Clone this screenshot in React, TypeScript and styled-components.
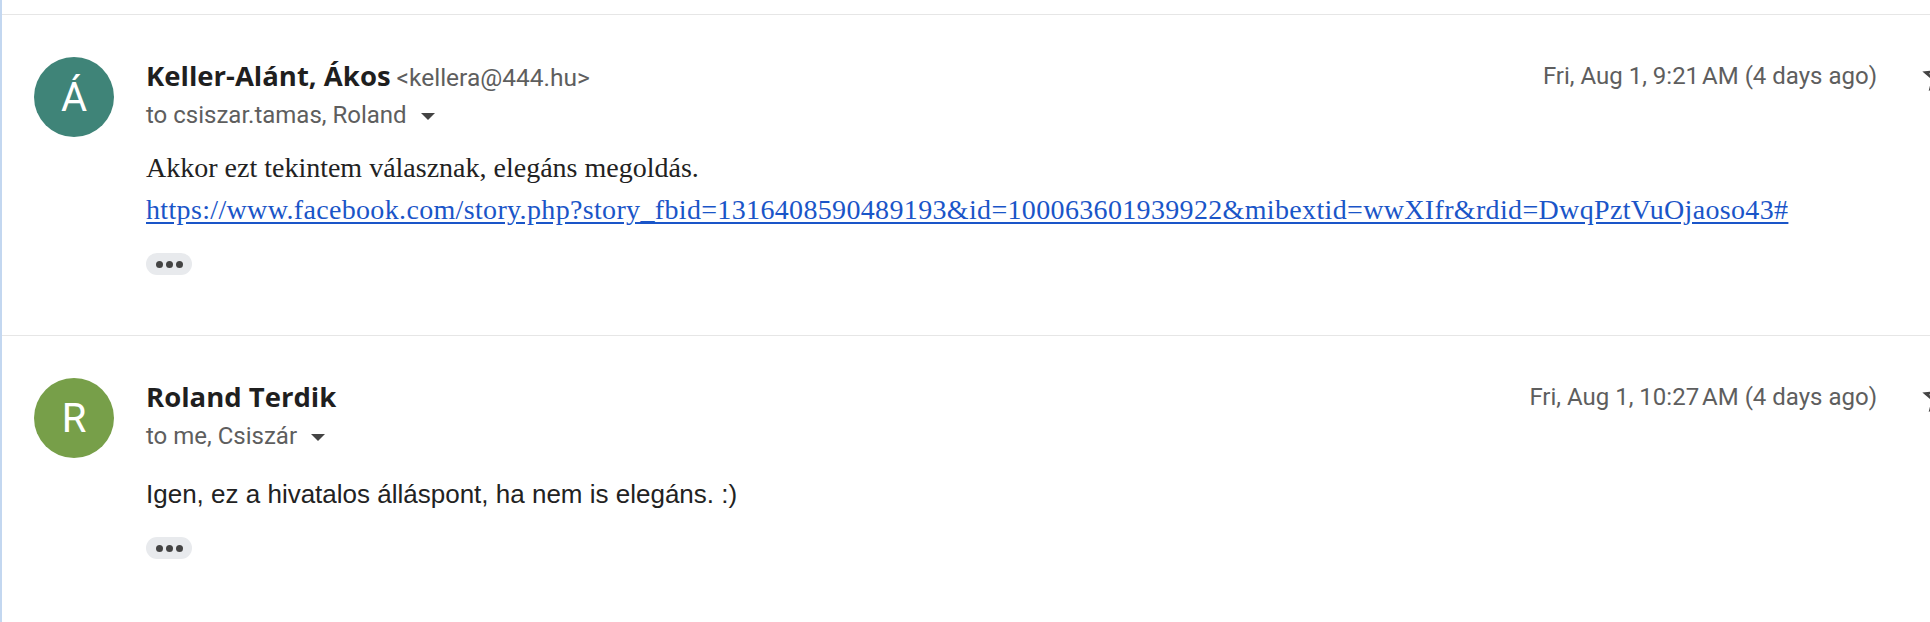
import React from 'react';
import styled, { createGlobalStyle } from 'styled-components';

const GlobalStyle = createGlobalStyle`
  html, body {
    margin: 0;
    padding: 0;
    background: #fff;
    overflow: hidden;
  }
  body {
    font-family: Roboto, "Liberation Sans", Arial, sans-serif;
    color: #1f1f1f;
  }
`;

// the thread is wider than the window: the action icons run past the right edge
const Thread = styled.div`
  width: 2079px;
  min-height: 100vh;
  box-sizing: border-box;
  border-left: 2px solid #c3d7f0;
`;

const PrevEnd = styled.div`
  height: 14px;
`;

const Message = styled.article`
  display: grid;
  grid-template-columns: 80px 1fr;
  column-gap: 32px;
  padding: 42px 0 60px 32px;
  border-top: 1px solid #e6e6e6;
`;

const Avatar = styled.div<{ $bg: string }>`
  width: 80px;
  height: 80px;
  border-radius: 50%;
  background: ${(p) => p.$bg};
  color: #fff;
  display: flex;
  align-items: center;
  justify-content: center;
  font-family: Roboto, "Liberation Sans", sans-serif;
  font-size: 40px;
  font-weight: 400;
`;

const Content = styled.div`
  display: flex;
  flex-direction: column;
  align-items: flex-start;
  min-width: 0;
`;

const Header = styled.div`
  display: flex;
  justify-content: space-between;
  align-items: flex-start;
  width: 100%;
`;

const Who = styled.div`
  display: flex;
  flex-direction: column;
`;

const SenderLine = styled.div`
  height: 38px;
  line-height: 38px;
  white-space: nowrap;
`;

const SenderName = styled.span`
  font-family: "Open Sans", Roboto, sans-serif;
  font-weight: 700;
  font-size: 27.5px;
  color: #1f1f1f;
`;

const SenderMail = styled.span`
  font-size: 24.5px;
  color: #5e5e5e;
  margin-left: 6px;
`;

const Recipients = styled.div`
  display: flex;
  align-items: center;
  gap: 14px;
  height: 40px;
  font-size: 24px;
  color: #5e5e5e;
  white-space: nowrap;
`;

const Caret = styled.span`
  width: 0;
  height: 0;
  border-left: 7px solid transparent;
  border-right: 7px solid transparent;
  border-top: 7px solid #444;
  margin-top: 2px;
`;

const Meta = styled.div`
  display: flex;
  align-items: center;
  height: 38px;
`;

const DateText = styled.span`
  font-size: 24px;
  color: #5e5e5e;
  white-space: nowrap;
`;

const Icons = styled.div`
  display: flex;
  align-items: center;
  gap: 20px;
  margin-left: 42px;
  color: #444;
`;

const Body = styled.div<{ $serif?: boolean }>`
  margin-top: ${(p) => (p.$serif ? '12px' : '17px')};
  font-family: ${(p) =>
    p.$serif ? '"Liberation Serif", "Times New Roman", serif' : '"Liberation Sans", Arial, sans-serif'};
  font-size: ${(p) => (p.$serif ? '28px' : '26px')};
  line-height: 42px;
  color: #222;
  white-space: nowrap;
`;

const BodyLink = styled.a`
  color: #1a55c8;
  letter-spacing: 0.34px;
  text-decoration: underline;
  text-underline-offset: 3px;
`;

const MoreButton = styled.button`
  display: flex;
  align-items: center;
  justify-content: center;
  gap: 3px;
  width: 46px;
  height: 22px;
  margin-top: 22px;
  padding: 0;
  border: none;
  border-radius: 11px;
  background: #e8eaed;
  cursor: pointer;
`;

const Dot = styled.span`
  width: 7px;
  height: 7px;
  border-radius: 50%;
  background: #444;
`;

const StarIcon = () => (
  <svg width="40" height="40" viewBox="0 0 24 24" fill="currentColor">
    <path d="M22 9.24l-7.19-.62L12 2 9.19 8.63 2 9.24l5.46 4.73L5.82 21 12 17.27 18.18 21l-1.63-7.03L22 9.24zM12 15.4l-3.76 2.27 1-4.28-3.32-2.88 4.38-.38L12 6.1l1.71 4.04 4.38.38-3.32 2.88 1 4.28L12 15.4z" />
  </svg>
);

const ReplyIcon = () => (
  <svg width="40" height="40" viewBox="0 0 24 24" fill="currentColor">
    <path d="M10 9V5l-7 7 7 7v-4.1c5 0 8.5 1.6 11 5.1-1-5-4-10-11-11z" />
  </svg>
);

const MoreIcon = () => (
  <svg width="40" height="40" viewBox="0 0 24 24" fill="currentColor">
    <circle cx="12" cy="5" r="2" />
    <circle cx="12" cy="12" r="2" />
    <circle cx="12" cy="19" r="2" />
  </svg>
);

type Mail = {
  initial: string;
  color: string;
  name: string;
  email?: string;
  to: string;
  date: string;
  serif?: boolean;
  lines: React.ReactNode[];
};

const mails: Mail[] = [
  {
    initial: 'Á',
    color: '#3f8478',
    name: 'Keller-Alánt, Ákos',
    email: '<kellera@444.hu>',
    to: 'to csiszar.tamas, Roland',
    date: 'Fri, Aug 1, 9:21\u202FAM (4 days ago)',
    serif: true,
    lines: [
      'Akkor ezt tekintem válasznak, elegáns megoldás.',
      <BodyLink href="#">
        https://www.facebook.com/story.php?story_fbid=1316408590489193&id=100063601939922&mibextid=wwXIfr&rdid=DwqPztVuOjaoso43#
      </BodyLink>,
    ],
  },
  {
    initial: 'R',
    color: '#779f49',
    name: 'Roland Terdik',
    to: 'to me, Csiszár',
    date: 'Fri, Aug 1, 10:27\u202FAM (4 days ago)',
    lines: ['Igen, ez a hivatalos álláspont, ha nem is elegáns. :)'],
  },
];

const App: React.FC = () => {
  return (
    <>
      <GlobalStyle />
      <Thread>
        <PrevEnd />
        {mails.map((m) => (
          <Message key={m.name}>
            <Avatar $bg={m.color}>{m.initial}</Avatar>
            <Content>
              <Header>
                <Who>
                  <SenderLine>
                    <SenderName>{m.name}</SenderName>
                    {m.email && <SenderMail>{m.email}</SenderMail>}
                  </SenderLine>
                  <Recipients>
                    {m.to}
                    <Caret />
                  </Recipients>
                </Who>
                <Meta>
                  <DateText>{m.date}</DateText>
                  <Icons>
                    <StarIcon />
                    <ReplyIcon />
                    <MoreIcon />
                  </Icons>
                </Meta>
              </Header>
              <Body $serif={m.serif}>
                {m.lines.map((l, i) => (
                  <div key={i}>{l}</div>
                ))}
              </Body>
              <MoreButton aria-label="Show trimmed content">
                <Dot />
                <Dot />
                <Dot />
              </MoreButton>
            </Content>
          </Message>
        ))}
      </Thread>
    </>
  );
};

export default App;
